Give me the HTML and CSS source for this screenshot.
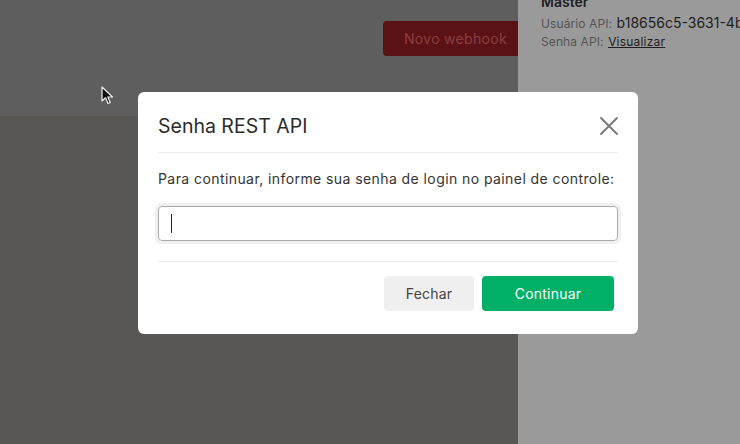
FILE: index.html
```html
<!DOCTYPE html>
<html lang="pt-BR">

<head>
    <meta charset="UTF-8" />
    <title>Senha REST API</title>
    <link rel="stylesheet" href="styles.css">
</head>

<body>
    <!-- Página atrás do modal -->
    <div class="page">
        <div class="main">
            <div class="toolbar">
                <button class="btn-webhook">Novo webhook</button>
            </div>
            <div class="content"></div>
        </div>

        <aside class="sidebar">
            <div class="account-name">Master</div>
            <div class="account-row"><span class="label">Usuário API:</span> <span class="value">b18656c5-3631-4b8e-9c1a</span></div>
            <div class="account-row"><span class="label">Senha API:</span> <a href="#" class="link">Visualizar</a></div>
        </aside>
    </div>

    <!-- Cursor do mouse -->
    <svg class="pointer" width="14" height="20" viewBox="0 0 14 20">
        <path d="M1 1 L1 15 L4.5 11.8 L7 17.5 L9.2 16.5 L6.8 11 L11.5 11 Z" fill="#111" stroke="#eee" stroke-width="1.2" stroke-linejoin="round" />
    </svg>

    <!-- Modal -->
    <div class="modal">
        <div class="modal-content">
            <div class="modal-header">
                <h2>Senha REST API</h2>
                <span class="close">
                    <svg width="20" height="20" viewBox="0 0 20 20">
                        <path d="M2 2 L18 18 M18 2 L2 18" stroke="#7a7a7a" stroke-width="2" stroke-linecap="round" />
                    </svg>
                </span>
            </div>
            <div class="modal-body">
                <p>Para continuar, informe sua senha de login no painel de controle:</p>
                <div class="input-wrap">
                    <input type="password" class="input" autofocus>
                    <span class="caret"></span>
                </div>
            </div>
            <div class="modal-footer">
                <button class="btn btn-light">Fechar</button>
                <button class="btn btn-green">Continuar</button>
            </div>
        </div>
    </div>
</body>

</html>
```

FILE: styles.css
```css
* {
    box-sizing: border-box;
}

body {
    margin: 0;
    padding: 0;
    width: 740px;
    height: 444px;
    overflow: hidden;
    font-family: Inter, "Open Sans", sans-serif;
    color: #333;
    position: relative;
}

.page {
    display: flex;
    height: 444px;
}

.main {
    flex: 1;
    display: flex;
    flex-direction: column;
}

.toolbar {
    height: 116px;
    background: #5e5e5e;
    display: flex;
    justify-content: flex-end;
    align-items: flex-start;
    padding-top: 21px;
}

.btn-webhook {
    width: 142px;
    height: 35px;
    margin-right: -7px;
    border: none;
    border-radius: 4px;
    background: #5a1216;
    color: #8c3d40;
    font-family: inherit;
    font-size: 14px;
    letter-spacing: 0.3px;
    text-align: left;
    padding-left: 21px;
}

.content {
    flex: 1;
    background: #585755;
}

.sidebar {
    width: 222px;
    background: #9a9a9a;
    padding: 0 0 0 23px;
    position: relative;
    z-index: 1;
    white-space: nowrap;
    overflow: hidden;
}

.account-name {
    font-size: 14px;
    font-weight: 600;
    color: #1e1e1e;
    line-height: 16px;
    margin-top: -6px;
    margin-bottom: 4px;
}

.account-row {
    line-height: 17px;
}

.label {
    font-size: 12px;
    letter-spacing: 0.1px;
    color: #555;
}

.value {
    font-size: 14px;
    color: #1e1e1e;
}

.link {
    font-size: 12px;
    letter-spacing: 0.2px;
    color: #1e1e1e;
}

.pointer {
    position: absolute;
    left: 101px;
    top: 86px;
}

.modal {
    position: absolute;
    inset: 0;
    z-index: 2;
    pointer-events: none;
}

.modal-content {
    pointer-events: auto;
    position: absolute;
    left: 138px;
    top: 92px;
    width: 500px;
    background: #fff;
    border-radius: 6px;
    padding: 0 20px;
}

.modal-header {
    display: flex;
    align-items: center;
    justify-content: space-between;
    padding: 20px 0 12px;
    border-bottom: 1px solid #e8e8e8;

    h2 {
        margin: 0;
        font-size: 19.5px;
        font-weight: 400;
        line-height: 28px;
        color: #2b2b2b;
    }
}

.close {
    display: flex;
    margin-right: -1px;
}

.modal-body {
    padding: 15px 0 20px;
    border-bottom: 1px solid #e8e8e8;

    p {
        margin: 0 0 17px;
        font-size: 14px;
        letter-spacing: 0.42px;
        line-height: 21px;
        color: #333;
    }
}

.input-wrap {
    position: relative;
}

.input {
    display: block;
    width: 100%;
    height: 35px;
    border: 1px solid #aaa;
    border-radius: 4px;
    outline: 3px solid #efefef;
    background: #fff;
    padding: 0 12px;
    font-size: 14px;
}

.caret {
    position: absolute;
    left: 13px;
    top: 8px;
    width: 1px;
    height: 19px;
    background: #222;
}

.modal-footer {
    display: flex;
    justify-content: flex-end;
    gap: 8px;
    padding: 14px 4px 23px 0;
}

.btn {
    height: 35px;
    border: none;
    border-radius: 4px;
    font-family: inherit;
    font-size: 14px;
    letter-spacing: 0.2px;
}

.btn-light {
    width: 90px;
    background: #efefef;
    color: #444;
}

.btn-green {
    width: 132px;
    background: #00b066;
    color: #fff;
}
```
